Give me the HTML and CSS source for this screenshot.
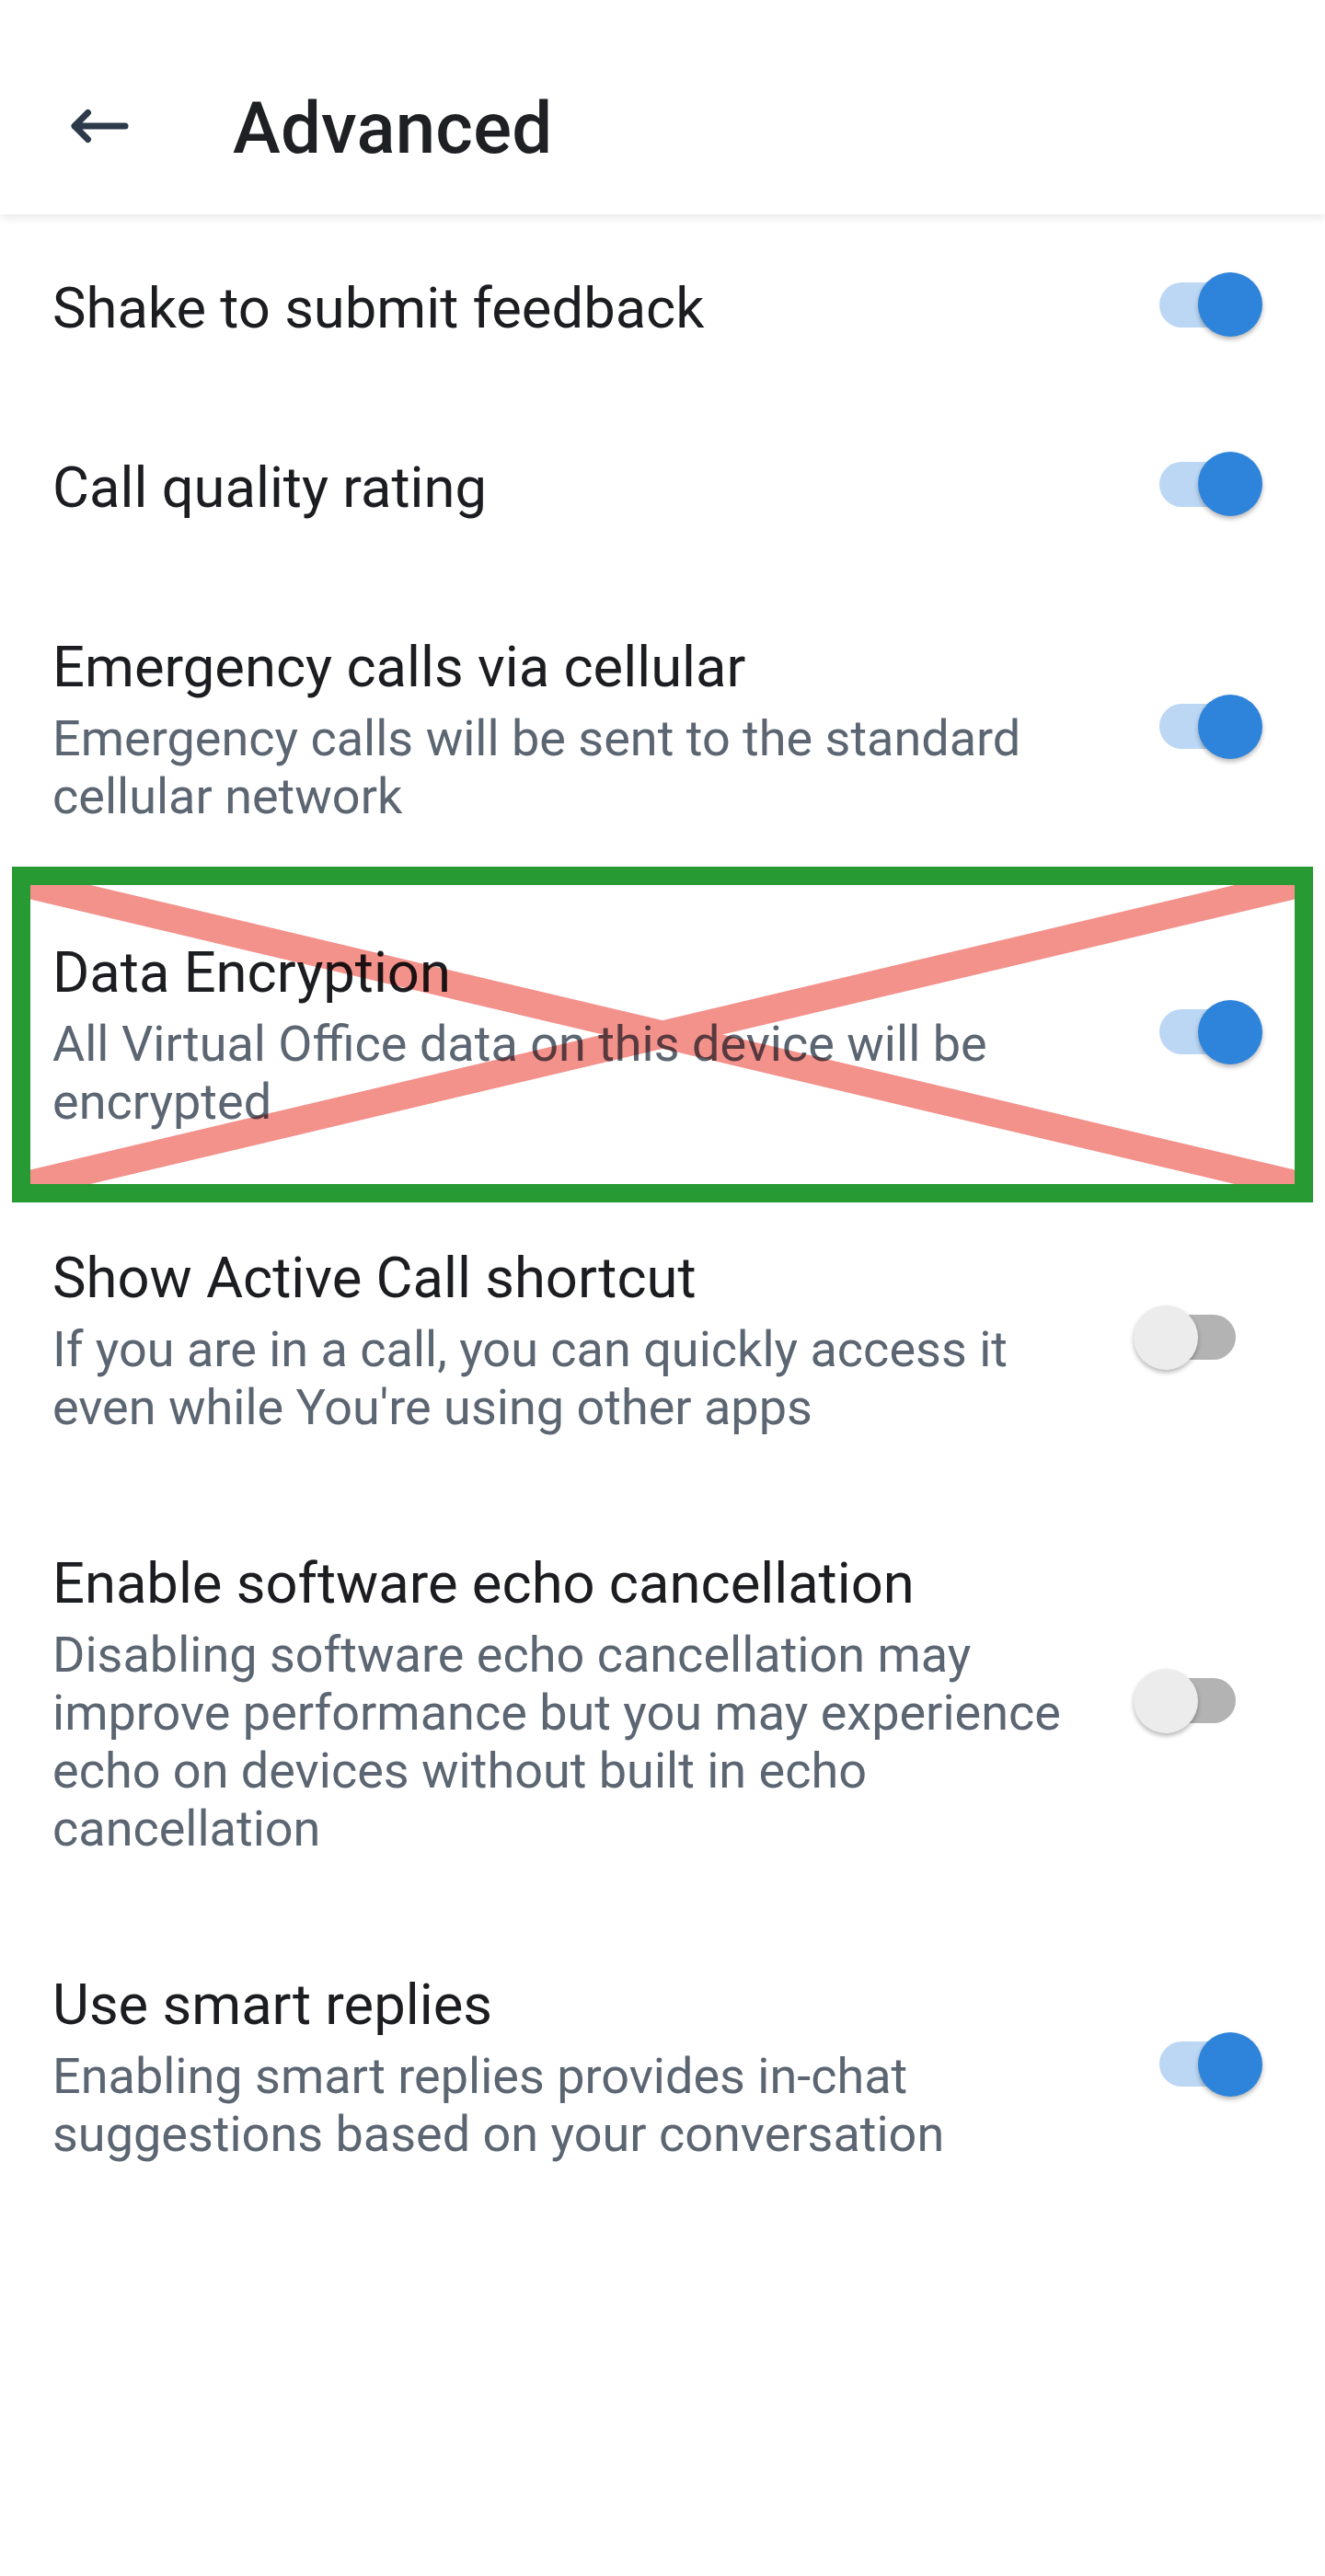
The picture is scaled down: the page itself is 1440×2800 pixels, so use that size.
FILE: index.html
```html
<!DOCTYPE html>
<html lang="en">
<head>
<meta charset="utf-8">
<title>Advanced</title>
<link rel="stylesheet" href="styles.css">
</head>
<body>
<header class="appbar">
  <svg class="back" width="90" height="60" viewBox="0 0 90 60" aria-hidden="true">
    <path d="M21 30 H76 M35.5 15.5 L21 30 L35.5 44.5" fill="none" stroke="#2d3a4b" stroke-width="7" stroke-linecap="round" stroke-linejoin="round"/>
  </svg>
  <h1 class="title">Advanced</h1>
</header>
<main class="list">
  <div class="row">
    <div class="text"><div class="label">Shake to submit feedback</div></div>
    <div class="switch on"><span class="track"></span><span class="thumb"></span></div>
  </div>
  <div class="row">
    <div class="text"><div class="label">Call quality rating</div></div>
    <div class="switch on"><span class="track"></span><span class="thumb"></span></div>
  </div>
  <div class="row">
    <div class="text"><div class="label">Emergency calls via cellular</div><div class="sub">Emergency calls will be sent to the standard cellular network</div></div>
    <div class="switch on"><span class="track"></span><span class="thumb"></span></div>
  </div>
  <div class="row marked">
    <div class="text"><div class="label">Data Encryption</div><div class="sub">All Virtual Office data on this device will be encrypted</div></div>
    <div class="switch on"><span class="track"></span><span class="thumb"></span></div>
    <div class="mark">
      <svg class="cross" viewBox="0 0 100 100" preserveAspectRatio="none" aria-hidden="true">
        <line x1="0" y1="0" x2="100" y2="100" vector-effect="non-scaling-stroke"/>
        <line x1="100" y1="0" x2="0" y2="100" vector-effect="non-scaling-stroke"/>
      </svg>
    </div>
  </div>
  <div class="row">
    <div class="text"><div class="label">Show Active Call shortcut</div><div class="sub">If you are in a call, you can quickly access it even while You're using other apps</div></div>
    <div class="switch off"><span class="track"></span><span class="thumb"></span></div>
  </div>
  <div class="row">
    <div class="text"><div class="label">Enable software echo cancellation</div><div class="sub">Disabling software echo cancellation may improve performance but you may experience echo on devices without built in echo cancellation</div></div>
    <div class="switch off"><span class="track"></span><span class="thumb"></span></div>
  </div>
  <div class="row">
    <div class="text"><div class="label">Use smart replies</div><div class="sub">Enabling smart replies provides in-chat suggestions based on your conversation</div></div>
    <div class="switch on"><span class="track"></span><span class="thumb"></span></div>
  </div>
</main>
</body>
</html>
```
FILE: styles.css
```css
html, body {
  margin: 0;
  padding: 0;
  background: #ffffff;
}
body {
  width: 1440px;
  min-height: 2800px;
  font-family: Roboto, "Noto Sans", "Liberation Sans", sans-serif;
  color: #1c1d21;
}
.appbar {
  position: relative;
  z-index: 2;
  height: 233px;
  box-sizing: border-box;
  padding: 40px 0 0 60px;
  display: flex;
  align-items: center;
  background: #ffffff;
  box-shadow: 0 4px 9px rgba(0, 0, 0, 0.09);
}
.back {
  display: block;
  flex: none;
}
.title {
  margin: 6px 0 0 103px;
  font-size: 78px;
  line-height: 94px;
  font-weight: 500;
  color: #1e2024;
  letter-spacing: 0.2px;
}
.list {
  padding-top: 4px;
}
.row {
  position: relative;
  display: flex;
  align-items: center;
  gap: 45px;
  padding: 62.5px 68px 62.5px 57px;
}
.text {
  flex: 1;
  min-width: 0;
}
.label {
  font-size: 61.5px;
  line-height: 70px;
  color: #1c1d21;
}
.sub {
  margin-top: 11px;
  font-size: 54px;
  line-height: 63px;
  color: #5c6672;
}
.switch {
  position: relative;
  flex: none;
  width: 140px;
  height: 70px;
  margin: -3.5px 0 3.5px 0;
}
.track {
  position: absolute;
  left: 28px;
  top: 10.5px;
  width: 83px;
  height: 49px;
  border-radius: 24.5px;
}
.thumb {
  position: absolute;
  top: 0;
  width: 70px;
  height: 70px;
  border-radius: 50%;
  box-shadow: 0 3px 5px rgba(0, 0, 0, 0.28);
}
.switch.on .track { background: #bbd7f4; }
.switch.on .thumb { left: 70px; background: #2e84db; }
.switch.off .track { background: #b3b3b3; }
.switch.off .thumb { left: 0; background: #ececec; }
.mark {
  position: absolute;
  top: -17px;
  bottom: -16px;
  left: 13px;
  right: 13px;
  border: 20px solid #279a33;
  overflow: hidden;
  pointer-events: none;
}
.cross {
  display: block;
  width: 100%;
  height: 100%;
  mix-blend-mode: multiply;
}
.cross line {
  stroke: #f3918b;
  stroke-width: 30;
}
```
